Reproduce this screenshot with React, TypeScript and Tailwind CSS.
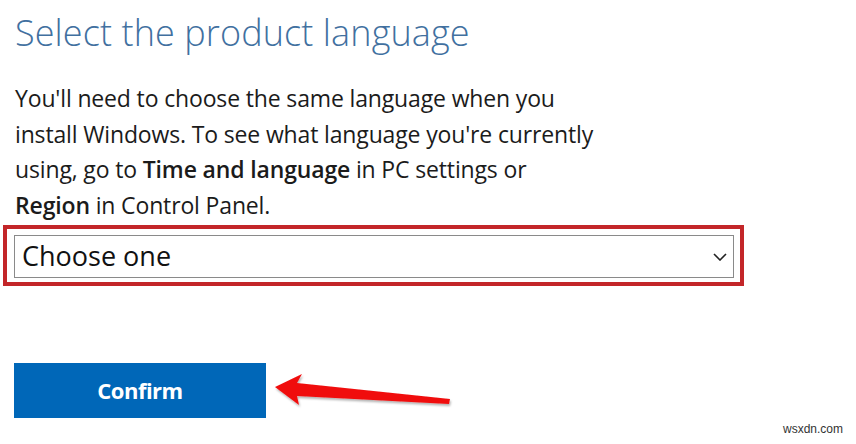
import React from "react";

export default function App() {
  return (
    <div className="relative w-[856px] h-[444px] bg-white overflow-hidden" style={{ fontFamily: '"Open Sans", "Noto Sans", sans-serif' }}>
      <div className="pt-[8px] pl-[15px]">
        <h1 className="text-[36px] leading-[50px] font-light text-[#41709f] tracking-[0.1px]">
          Select the product language
        </h1>
        <p className="mt-[23px] text-[23px] leading-[35.5px] text-[#1b1b1b] tracking-[-0.15px]">
          You'll need to choose the same language when you
          <br />
          install Windows. To see what language you're currently
          <br />
          using, go to <b className="font-semibold">Time and language</b> in PC settings or
          <br />
          <b className="font-semibold">Region</b> in Control Panel.
        </p>
      </div>
      <div className="ml-[3px] mt-[2px] w-[741px] h-[61px] border-[4px] border-[#c32629] pl-[7px] pr-[6px] pt-[6px]">
        <div className="h-[43px] border border-[#8a8a8a] flex items-center justify-between pl-[7px] pr-[6px]">
          <span className="text-[27px] text-[#111]">Choose one</span>
          <svg width="14" height="8" viewBox="0 0 14 8">
            <path d="M1 1 L7 7 L13 1" fill="none" stroke="#222" strokeWidth="1.6" />
          </svg>
        </div>
      </div>
      <div className="mt-[77px] ml-[14px] flex items-center">
        <div className="w-[252px] h-[55px] bg-[#0067b8] flex items-center justify-center">
          <span className="text-[22px] font-bold text-white tracking-[-0.5px]">Confirm</span>
        </div>
        <svg width="190" height="44" viewBox="0 0 190 44" className="ml-[6px] mt-[6px]">
          <defs>
            <filter id="sh" x="-10%" y="-30%" width="120%" height="160%">
              <feDropShadow dx="1" dy="2" stdDeviation="1.2" floodColor="#000" floodOpacity="0.3" />
            </filter>
          </defs>
          <polygon
            points="3,15 30,2 25,11 178,27 177,32 25,24 27,33"
            fill="#f00f0f"
            filter="url(#sh)"
          />
        </svg>
      </div>
      <div className="absolute right-[13px] bottom-[6px] text-[12px] text-[#333]" style={{ fontFamily: '"Liberation Sans", Arial, sans-serif' }}>
        wsxdn.com
      </div>
    </div>
  );
}
